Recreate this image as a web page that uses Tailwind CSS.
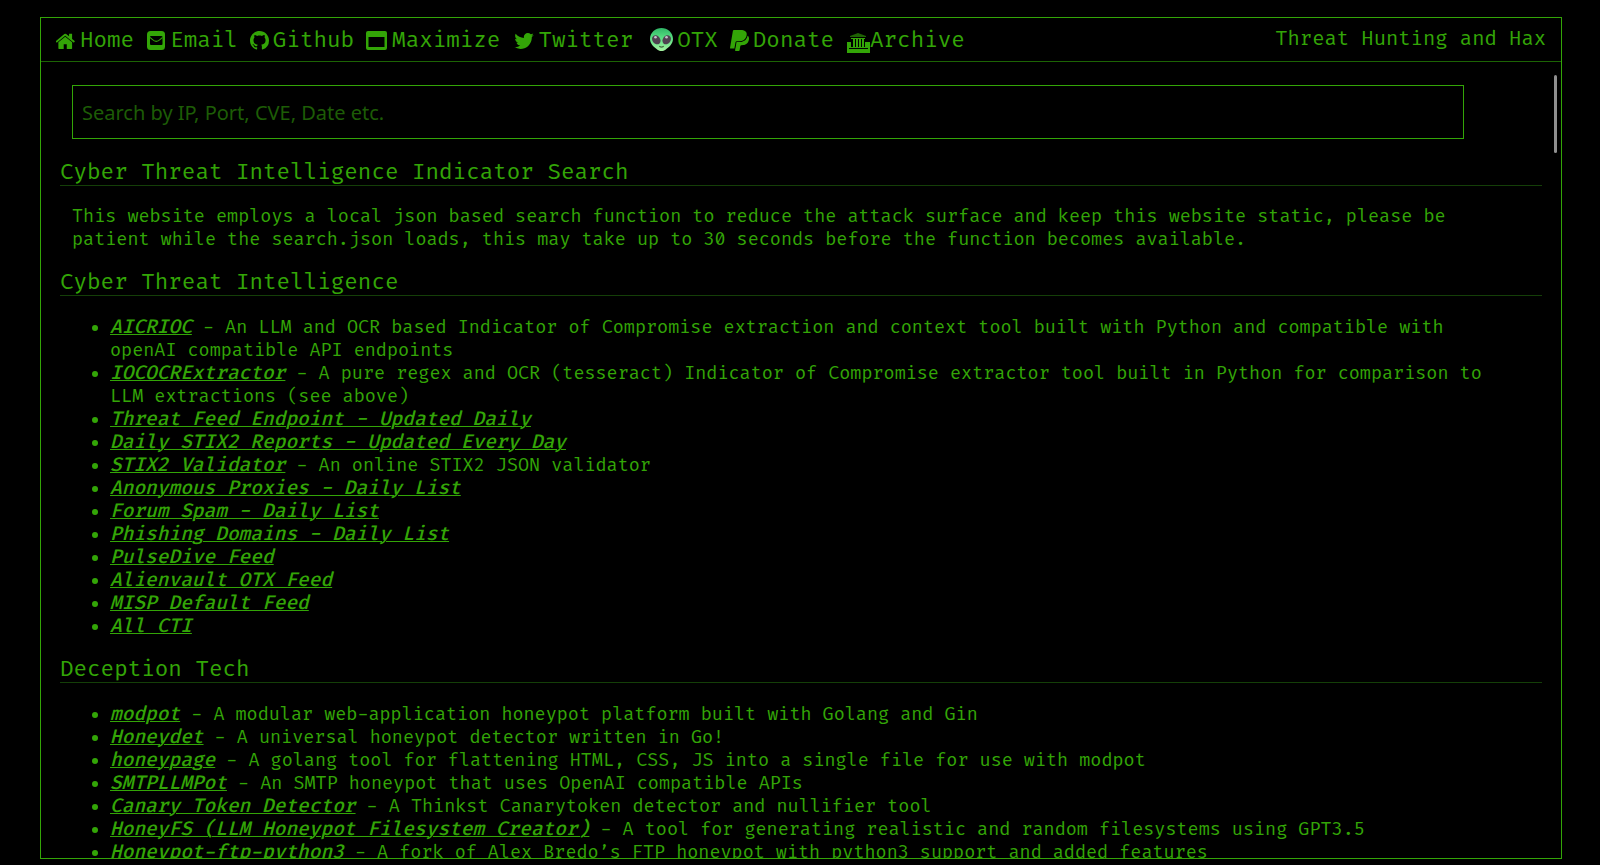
<!DOCTYPE html>
<html lang="en">
<head>
<meta charset="utf-8">
<meta name="viewport" content="width=device-width, initial-scale=1">
<title>Threat Hunting and Hax</title>
<script src="https://cdn.jsdelivr.net/npm/@tailwindcss/browser@4"></script>
</head>
<body class="bg-black text-[#33a507] font-['Fira_Code','Fira_Mono','Noto_Sans_Mono','Liberation_Mono',monospace]">
<div class="relative flex h-dvh flex-col pt-[17px] pr-[38px] pb-1.5 pl-10">
  <div class="relative flex min-h-0 flex-1 flex-col border border-[#33a507]">
    <header class="flex min-h-11 flex-wrap items-center justify-between border-b border-[#1c6404] px-[15px]">
      <nav aria-label="Main" class="flex flex-wrap items-center gap-x-3 pt-0.5 text-[22px] leading-7">
        <a href="#home" class="flex items-center gap-1">
          <svg class="h-4 w-5" viewBox="64 200 1664 1344" fill="currentColor" aria-hidden="true"><path d="M1408 992v480q0 26-19 45t-45 19h-384v-384h-256v384h-384q-26 0-45-19t-19-45v-480q0-1 .5-3t.5-3l575-474 575 474q1 2 1 6zm223-69l-62 74q-8 9-21 11h-3q-13 0-21-7l-692-577-692 577q-12 8-24 7-13-2-21-11l-62-74q-8-10-7-23.5t11-21.5l719-599q32-26 76-26t76 26l244 204v-195q0-14 9-23t23-9h192q14 0 23 9t9 23v408l219 182q10 8 11 21.5t-7 23.5z"/></svg>Home</a>
        <a href="#email" class="flex items-center gap-1">
          <svg class="h-[19px] w-5" viewBox="-1 0 20 19" aria-hidden="true"><rect width="18" height="19" rx="3.5" fill="currentColor"/><rect x="3" y="5" width="12.5" height="9" rx="1"/><path d="M3 6.500c2 1.200 3.600 3.900 6.250 3.900s4.250-2.700 6.250-3.900" fill="none" stroke="currentColor" stroke-width="1.100"/></svg>Email</a>
        <a href="#github" class="flex items-center gap-1">
          <svg class="h-[19px] w-[19px]" viewBox="0 0 16 16" fill="currentColor" aria-hidden="true"><path d="M8 0C3.580 0 0 3.580 0 8c0 3.540 2.290 6.530 5.470 7.590.4.070.55-.17.55-.38 0-.19-.01-.82-.01-1.490-2.010.37-2.530-.49-2.690-.94-.09-.23-.48-.94-.82-1.130-.28-.15-.68-.52-.01-.53.63-.01 1.080.58 1.230.82.72 1.210 1.870.87 2.330.66.070-.52.28-.87.51-1.070-1.780-.2-3.640-.89-3.640-3.950 0-.87.31-1.590.82-2.150-.08-.2-.36-1.020.08-2.120 0 0 .67-.21 2.200.82.640-.18 1.320-.27 2-.27s1.360.09 2 .27c1.530-1.040 2.200-.82 2.200-.82.44 1.100.16 1.920.08 2.120.51.56.82 1.270.82 2.150 0 3.070-1.870 3.750-3.650 3.950.29.25.54.73.54 1.480 0 1.070-.01 1.930-.01 2.200 0 .21.15.46.55.38A8.010 8.010 0 0 0 16 8c0-4.420-3.580-8-8-8z"/></svg>Github</a>
        <button type="button" class="flex cursor-pointer items-center gap-1">
          <svg class="h-[19px] w-[22px]" viewBox="1 0 22 19" aria-hidden="true"><path fill="currentColor" fill-rule="evenodd" d="M3 0h17a2 2 0 0 1 2 2v15a2 2 0 0 1-2 2H3a2 2 0 0 1-2-2V2a2 2 0 0 1 2-2zm.5 6v10h16V6z"/></svg>Maximize</button>
        <a href="#twitter" class="flex items-center gap-1">
          <svg class="h-4 w-[22px]" viewBox="-80 256 1780 1280" preserveAspectRatio="xMaxYMid meet" fill="currentColor" aria-hidden="true"><path d="M1684 408q-67 98-162 167 1 14 1 42 0 130-38 259.500t-115.500 248.500-184.500 210.500-258 146-323 54.500q-271 0-496-145 35 4 78 4 225 0 401-138-105-2-188-64.500t-114-159.500q33 5 61 5 43 0 85-11-112-23-185.500-111.500t-73.500-205.500v-4q68 38 146 41-66-44-105-115t-39-154q0-88 44-163 121 149 294.500 238.500t371.500 99.500q-8-38-8-74 0-134 94.500-228.500t228.500-94.500q140 0 236 102 109-21 205-78-37 115-142 178 93-10 186-50z"/></svg>Twitter</a>
        <a href="#otx" class="flex items-center gap-1">
          <svg class="mb-0.5 h-[23px] w-7" viewBox="-5 0 28 23" aria-hidden="true">
            <defs><linearGradient id="skin" x1="0" y1="0" x2="0" y2="1"><stop offset="0" stop-color="#2fb566"/><stop offset=".4" stop-color="#55dc80"/><stop offset="1" stop-color="#a5f0a0"/></linearGradient></defs>
            <path fill="url(#skin)" d="M11.500 0C17.500 0 23 4.500 23 11c0 5-4.500 8.500-7.500 10.700-2.200 1.700-5.800 1.700-8 0C4.500 19.500 0 16 0 11 0 4.500 5.500 0 11.500 0z"/>
            <ellipse cx="6.300" cy="11.800" rx="3.900" ry="4.900" transform="rotate(-38 6.300 11.800)" fill="#4f4150"/>
            <ellipse cx="16.700" cy="11.800" rx="3.900" ry="4.900" transform="rotate(38 16.700 11.800)" fill="#4f4150"/>
            <circle cx="5.500" cy="9.300" r="1.300" fill="#c9bfce"/><circle cx="16.500" cy="9.300" r="1.300" fill="#c9bfce"/>
            <path d="M9.700 18.500q1.800 1.200 3.600 0" fill="none" stroke="#42663f" stroke-width="1.300" stroke-linecap="round"/>
          </svg>OTX</a>
        <a href="#donate" class="flex items-center gap-1">
          <svg class="h-[21px] w-[19px]" viewBox="0 28 384 456" preserveAspectRatio="none" fill="currentColor" aria-hidden="true"><path d="M357.100 152c-1.800-1.300-2.500-1.800-3 1.300-2 11.400-5.100 22.500-8.800 33.600-39.900 113.800-150.500 103.900-204.500 103.900-6.100 0-10.100 3.300-10.900 9.400-22.600 140.400-27.100 169.700-27.100 169.700-1 7.100 3.500 12.900 10.600 12.900h63.500c8.600 0 15.700-6.300 17.400-14.900.7-5.400-1.100 6.100 14.400-91.300 4.600-22 14.300-19.700 29.300-19.700 71 0 126.400-28.800 142.900-112.300 6.500-34.800 4.600-71.400-23.800-92.600z"/><path stroke="#000" stroke-width="18" paint-order="stroke" d="M111.400 295.900c-3.500 19.200-17.400 108.700-21.500 134-.3 1.800-1 2.500-3 2.500H12.300c-7.600 0-13.100-6.600-12.100-13.900L58.800 46.600c1.500-9.600 10.100-16.900 20-16.900 152.300 0 165.100-3.700 204 11.400 60.100 23.300 65.600 79.500 44 140.300-21.500 62.600-72.500 89.500-140.100 90.300-43.400.7-69.500-7-75.300 24.200z"/></svg>Donate</a>
        <a href="#archive" class="flex items-center">
          <svg class="mt-1 h-5 w-6" viewBox="0 0 24 20" fill="currentColor" aria-hidden="true"><path fill-opacity=".6" d="M12 0l8 3v1H4V3z"/><path d="M5 5h14v1H5zM7 6h2v8H7zM10 6h2v8h-2zM13 6h2v8h-2zM16 6h2v8h-2z"/><path fill-rule="evenodd" d="M1 9h4v5h14V9h5v11H1zM3 15v1h19v-1z"/></svg>Archive</a>
      </nav>
      <p class="pb-0.5 text-[20px] leading-7">Threat Hunting and Hax</p>
    </header>

    <main class="min-h-0 flex-1 overflow-y-auto px-[19px] pt-[23px] text-[18px] leading-[23px] [scrollbar-width:none]">
      <form role="search" class="mr-[78px] ml-3">
        <input type="search" aria-label="Search indicators" placeholder="Search by IP, Port, CVE, Date etc." class="block h-[54px] w-full border border-[#33a507] bg-black px-[9px] font-['Tahoma','Noto_Sans',sans-serif] text-[20px] outline-none placeholder:text-[#1d5c06]">
      </form>

      <h2 class="mt-[22px] border-b border-[#143f08] text-[22px] leading-6">Cyber Threat Intelligence Indicator Search</h2>
      <p class="mt-[19px] mr-8 ml-3">This website employs a local json based search function to reduce the attack surface and keep this website static, please be patient while the search.json loads, this may take up to 30 seconds before the function becomes available.</p>

      <h2 class="mt-5 border-b border-[#143f08] text-[22px] leading-6">Cyber Threat Intelligence</h2>
      <ul class="mt-5 list-disc pr-10 pl-[50px] [&_a]:text-[19px] [&_a]:font-medium [&_a]:italic [&_a]:underline [&_a]:decoration-1">
        <li><a href="#aicrioc">AICRIOC</a> - An LLM and OCR based Indicator of Compromise extraction and context tool built with Python and compatible with openAI compatible API endpoints</li>
        <li><a href="#iococr">IOCOCRExtractor</a> - A pure regex and OCR (tesseract) Indicator of Compromise extractor tool built in Python for comparison to LLM extractions (see above)</li>
        <li><a href="#threat-feed">Threat Feed Endpoint - Updated Daily</a></li>
        <li><a href="#stix2-reports">Daily STIX2 Reports - Updated Every Day</a></li>
        <li><a href="#stix2-validator">STIX2 Validator</a> - An online STIX2 JSON validator</li>
        <li><a href="#proxies">Anonymous Proxies - Daily List</a></li>
        <li><a href="#forum-spam">Forum Spam - Daily List</a></li>
        <li><a href="#phishing">Phishing Domains - Daily List</a></li>
        <li><a href="#pulsedive">PulseDive Feed</a></li>
        <li><a href="#alienvault">Alienvault OTX Feed</a></li>
        <li><a href="#misp">MISP Default Feed</a></li>
        <li><a href="#all-cti">All CTI</a></li>
      </ul>

      <h2 class="mt-5 border-b border-[#143f08] text-[22px] leading-6">Deception Tech</h2>
      <ul class="mt-5 list-disc pr-10 pl-[50px] [&_a]:text-[19px] [&_a]:font-medium [&_a]:italic [&_a]:underline [&_a]:decoration-1">
        <li><a href="#modpot">modpot</a> - A modular web-application honeypot platform built with Golang and Gin</li>
        <li><a href="#honeydet">Honeydet</a> - A universal honeypot detector written in Go!</li>
        <li><a href="#honeypage">honeypage</a> - A golang tool for flattening HTML, CSS, JS into a single file for use with modpot</li>
        <li><a href="#smtpllmpot">SMTPLLMPot</a> - An SMTP honeypot that uses OpenAI compatible APIs</li>
        <li><a href="#canary">Canary Token Detector</a> - A Thinkst Canarytoken detector and nullifier tool</li>
        <li><a href="#honeyfs">HoneyFS (LLM Honeypot Filesystem Creator)</a> - A tool for generating realistic and random filesystems using GPT3.5</li>
        <li><a href="#honeypot-ftp">Honeypot-ftp-python3</a> - A fork of Alex Bredo’s FTP honeypot with python3 support and added features</li>
      </ul>
    </main>
    <div class="absolute top-[57px] right-1 h-[78px] w-[3px] rounded-sm bg-[#8f8f8f]" aria-hidden="true"></div>
  </div>
</div>
</body>
</html>
